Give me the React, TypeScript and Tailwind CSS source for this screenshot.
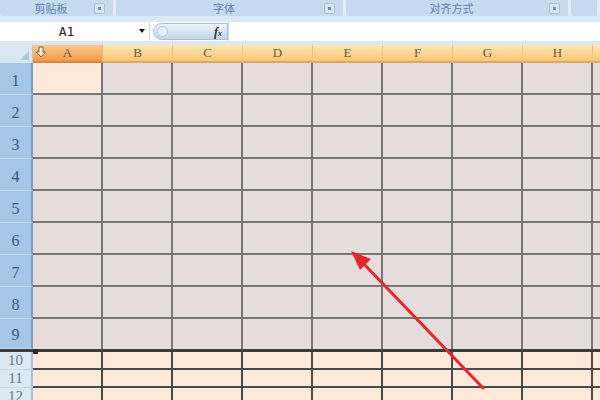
import React from "react";

const cols = ["A", "B", "C", "D", "E", "F", "G", "H"];
const tallRows = [1, 2, 3, 4, 5, 6, 7, 8, 9];
const shortRows = [10, 11, 12];

function Launcher() {
  return (
    <span className="flex h-[11px] w-[11px] items-center justify-center rounded-[2px] border border-[#a9bfdb] bg-[#d8e5f4]">
      <span className="h-[3px] w-[3px] bg-[#7a8ea8]" />
    </span>
  );
}

function Group({ label, width, launcher = true }: { label: string; width: string; launcher?: boolean }) {
  return (
    <div className={`${width} flex h-full items-center rounded-b-[3px] border-r-[3px] border-[#e4eef9] bg-[#c6daf0] px-2`}>
      <span className="flex-1 text-center text-[11px] text-[#5f7fb2]" style={{ fontFamily: '"Noto Sans CJK SC", sans-serif' }}>
        {label}
      </span>
      {launcher && <Launcher />}
    </div>
  );
}

function DownArrow() {
  return (
    <svg width="10" height="12" viewBox="0 0 10 12" className="absolute left-[3px] top-[1px]">
      <path d="M3 1h4v5h2.5L5 11 0.5 6H3z" fill="#fff3e0" stroke="#8a5a2a" strokeWidth="1" />
    </svg>
  );
}

export default function App() {
  return (
    <div className="relative h-[400px] w-[600px] overflow-hidden bg-[#dbe7f5]" style={{ fontFamily: '"Liberation Serif", serif' }}>
      {/* ribbon group labels */}
      <div className="flex h-[16px] bg-[#dbe7f5]">
        <Group label="剪贴板" width="w-[116px]" />
        <Group label="字体" width="w-[230px]" />
        <Group label="对齐方式" width="w-[225px]" />
        <Group label="" width="flex-1" launcher={false} />
      </div>
      <div className="h-[6px] bg-[#dbe7f5]" />

      {/* formula bar */}
      <div className="flex h-[19px] items-center bg-white">
        <div className="relative flex h-full w-[150px] items-center justify-center border-r border-[#c6d5e8] pr-[16px]">
          <span className="text-[13px] text-[#222]" style={{ fontFamily: '"DejaVu Sans Mono", monospace' }}>A1</span>
          <span className="absolute right-[4px] top-[7px] h-0 w-0 border-x-[3px] border-t-[4px] border-x-transparent border-t-[#111]" />
        </div>
        <div className="ml-[3px] flex h-[17px] w-[75px] items-center justify-between rounded-l-full rounded-r-[2px] border border-[#a9bfdb] bg-gradient-to-b from-[#eef3fa] to-[#c3d4ea] pl-[3px] pr-[5px]">
          <span className="h-[11px] w-[11px] rounded-full border border-[#b6c6da] bg-[#e8eef7]" />
          <span className="text-[12px] font-bold italic text-[#333]">f<span className="text-[8px]">x</span></span>
        </div>
        <div className="h-full flex-1 border-l border-[#c6d5e8]" />
      </div>
      <div className="h-[4px] bg-[#dbe7f5]" />

      {/* column headers */}
      <div className="flex h-[18px]">
        <div className="relative w-[33px] border-r border-[#b3c6dd] bg-[#dbe6f3]">
          <span className="absolute bottom-[3px] right-[3px] h-0 w-0 border-b-[9px] border-l-[9px] border-l-transparent border-b-[#b4c7dd]" />
        </div>
        {cols.map((c, i) => (
          <div
            key={c}
            className={`relative flex w-[70px] items-center justify-center border-r border-b-2 text-[13px] text-[#6a5a38] ${
              i === 0
                ? "border-r-[#e8b070] border-b-[#d88a3a] bg-gradient-to-b from-[#fbc98c] to-[#f39a48]"
                : "border-r-[#e7c08a] border-b-[#e2a85a] bg-gradient-to-b from-[#fde6b3] to-[#f9c675]"
            }`}
          >
            {i === 0 && <DownArrow />}
            {c}
          </div>
        ))}
        <div className="flex-1 border-b-2 border-[#e2a85a] bg-gradient-to-b from-[#fde6b3] to-[#f9c675]" />
      </div>

      {/* selected rows */}
      {tallRows.map((r) => (
        <div key={r} className={`flex ${r === 9 ? "h-[33px] border-b-[3px] border-[#3c3c3c]" : "h-[32px]"}`}>
          <div className="flex w-[33px] items-end justify-center border-b border-r-2 border-b-[#c5d9ef] border-r-[#7a9cc4] bg-[#a6c6e8] pb-[1px] text-[16px] text-[#3c5578]">
            {r}
          </div>
          {cols.map((c) => (
            <div
              key={c}
              className={`w-[70px] border-r-2 border-[#777] ${r === 9 ? "" : "border-b-2"} ${
                r === 1 && c === "A" ? "bg-[#fde9d9]" : "bg-[#e6dcdc]"
              }`}
            />
          ))}
          <div className={`flex-1 border-[#777] bg-[#e6dcdc] ${r === 9 ? "" : "border-b-2"}`} />
        </div>
      ))}

      {/* unselected rows */}
      {shortRows.map((r) => (
        <div key={r} className="flex h-[18px]">
          <div className="flex w-[33px] items-center justify-center border-b border-r-2 border-b-[#c9d8ea] border-r-[#a9bfdb] bg-[#dde8f5] text-[15px] text-[#6a7a8e]">
            {r}
          </div>
          {cols.map((c) => (
            <div key={c} className="w-[70px] border-b-2 border-r-2 border-[#4a4a4a] bg-[#fde9d9]" />
          ))}
          <div className="flex-1 border-b-2 border-[#4a4a4a] bg-[#fde9d9]" />
        </div>
      ))}

      {/* fill handle */}
      <span className="absolute left-[33px] top-[349px] h-[5px] w-[5px] bg-[#2a2a2a]" />

      {/* red annotation arrow */}
      <svg className="pointer-events-none absolute left-0 top-0" width="600" height="400" viewBox="0 0 600 400">
        <line x1="483" y1="388" x2="362" y2="262" stroke="#e8252b" strokeWidth="3" strokeLinecap="round" />
        <path d="M351 251 L371 259 L360 270 Z" fill="#e8252b" />
      </svg>
    </div>
  );
}
